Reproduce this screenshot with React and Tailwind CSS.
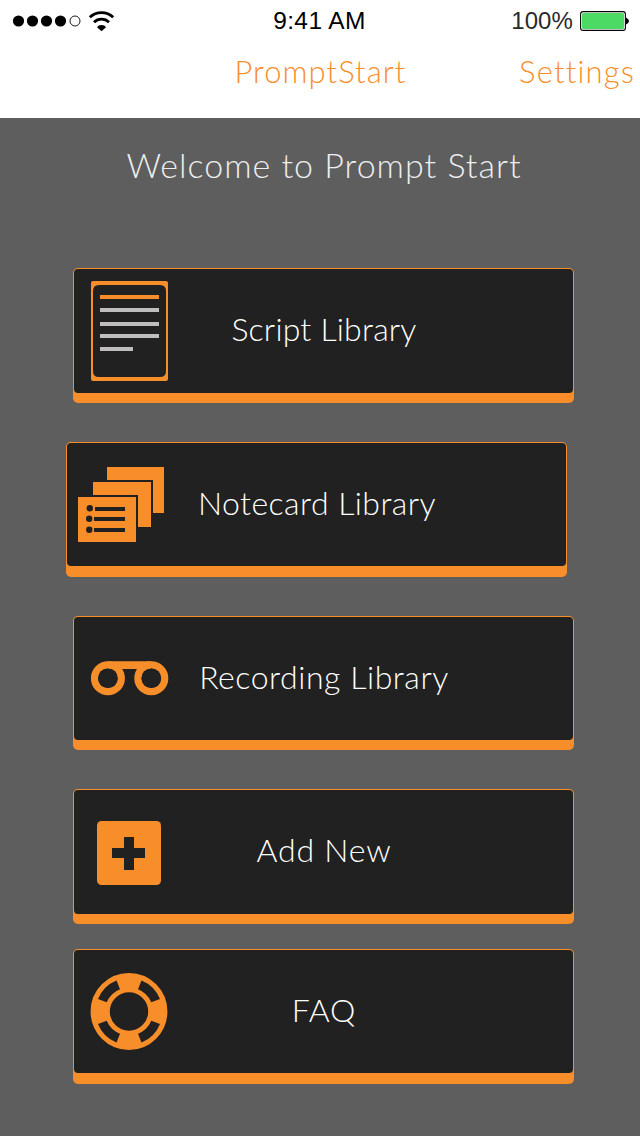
import React from "react";

function ScriptIcon() {
  return (
    <svg viewBox="0 0 77 100" className="ml-[17px] mt-3 h-[100px] w-[77px]">
      <path
        fill="#f88e2a"
        fillRule="evenodd"
        d="M2 0H75Q77 0 77 2V98Q77 100 75 100H2Q0 100 0 98V2Q0 0 2 0ZM8 4Q2 4 2 10V90Q2 96 8 96H69Q75 96 75 90V10Q75 4 69 4Z"
      />
      <path fill="#f88e2a" d="M9 14h59v4H9z" />
      <path fill="#bfbdbd" d="M9 27h59v4H9zM9 41h59v4H9zM9 53h59v4H9zM9 66h33v4H9z" />
    </svg>
  );
}

function NotecardIcon() {
  return (
    <svg viewBox="0 0 86 75" className="ml-[11px] mt-6 h-[75px] w-[86px]">
      <g fill="#f88e2a">
        <path d="M29 0h57v46H75V13H29z" />
        <path d="M15 15h58v45H60V28H15z" />
        <path d="M0 30h58v45H0z" />
      </g>
      <g fill="#212121">
        <circle cx="11.8" cy="41.3" r="3.2" />
        <circle cx="11.2" cy="51.7" r="3.2" />
        <circle cx="11.3" cy="62.7" r="3.2" />
        <path d="M17 40h30v4H17zM16 50h31v4H16zM16 61h31v4H16z" />
      </g>
    </svg>
  );
}

function RecordingIcon() {
  return (
    <svg viewBox="0 0 78 35" className="ml-[17px] mt-[44px] h-[35px] w-[78px]">
      <g fill="none" stroke="#f88e2a" strokeWidth="7.2">
        <circle cx="16.9" cy="17.3" r="13.4" />
        <circle cx="60.3" cy="17.3" r="13.4" />
      </g>
      <path fill="#f88e2a" d="M17 0.2H60V8H17z" />
      <circle cx="16.9" cy="17.3" r="9.8" fill="#212121" />
      <circle cx="60.3" cy="17.3" r="9.8" fill="#212121" />
    </svg>
  );
}

function AddIcon() {
  return (
    <svg viewBox="0 0 64 64" className="ml-[23px] mt-[31px] h-16 w-16">
      <rect width="64" height="64" rx="4.5" fill="#f88e2a" />
      <path fill="#212121" d="M27 16h10v11h11v10H37v12H27V37H15V27h12z" />
    </svg>
  );
}

function FaqIcon() {
  return (
    <svg viewBox="-39 -38.5 78 77" className="ml-4 mt-[23px] h-[77px] w-[78px]">
      <circle r="28.8" fill="none" stroke="#f88e2a" strokeWidth="19.2" />
      <g fill="#212121">
        <path d="M12.5 -31A33.4 33.4 0 0 1 31 -12.4L22.3 -9.2A24.2 24.2 0 0 0 9 -22.2Z" />
        <path d="M-12.5 -31A33.4 33.4 0 0 0 -31 -12.4L-22.3 -9.2A24.2 24.2 0 0 1 -9 -22.2Z" />
        <path d="M12.5 31A33.4 33.4 0 0 0 31 12.4L22.3 9.2A24.2 24.2 0 0 1 9 22.2Z" />
        <path d="M-12.5 31A33.4 33.4 0 0 1 -31 12.4L-22.3 9.2A24.2 24.2 0 0 0 -9 22.2Z" />
      </g>
    </svg>
  );
}

function MenuButton({ icon, label, className, labelClass = "" }) {
  return (
    <button
      className={`grid w-[501px] items-start rounded-[5px] bg-[#f88e2a] px-px pt-px text-left ${className}`}
    >
      <span className="grid h-full w-full rounded-[4px] bg-[#212121]">
        <span className="col-start-1 row-start-1">{icon}</span>
        <span
          className={`col-start-1 row-start-1 mt-10 pl-px text-center text-[32px] leading-10 font-light whitespace-nowrap text-white ${labelClass}`}
        >
          {label}
        </span>
      </span>
    </button>
  );
}

function StatusBar() {
  return (
    <div className="grid h-10 grid-cols-3 items-start pr-[11px] pl-3 font-['Liberation_Sans',sans-serif] text-[24px] leading-10 text-black">
      <svg viewBox="12 0 110 40" className="h-10 w-[110px]">
        <circle cx="18.5" cy="21" r="5.6" />
        <circle cx="32.5" cy="21" r="5.6" />
        <circle cx="46.5" cy="21" r="5.6" />
        <circle cx="60.5" cy="21" r="5.6" />
        <circle cx="75" cy="21" r="5" fill="none" stroke="#000" strokeWidth="0.9" />
        <g fill="none" stroke="#000" strokeWidth="2.8">
          <path d="M89.8 17.2A17 17 0 0 1 113.2 17.2" />
          <path d="M94 22.2A10.7 10.7 0 0 1 109 22.2" />
        </g>
        <path d="M97 27.2Q98 25 101.5 25T106 27.2L101.5 31.2Z" />
      </svg>
      <span className="pt-px pr-0.5 text-center text-[24.5px] tracking-[0.4px]">9:41 AM</span>
      <span className="flex items-center justify-end gap-[7px] pt-px">
        <span className="tracking-[0.1px] text-[#2a2a2a]">100%</span>
        <svg viewBox="0 0 49 20" className="h-5 w-[49px]">
          <rect x="0.6" y="0.6" width="44.8" height="18.8" rx="2.5" fill="none" stroke="#000" strokeWidth="1.1" />
          <rect x="2" y="2" width="42" height="16" rx="1.5" fill="#4cd964" />
          <path d="M46 6.5Q49 8 49 10T46 13.5Z" />
        </svg>
      </span>
    </div>
  );
}

export default function App() {
  return (
    <div className="flex h-[1136px] w-[640px] flex-col bg-[#5e5e5e] font-['Lato',sans-serif]">
      <header className="h-[118px] bg-white">
        <StatusBar />
        <nav className="grid grid-cols-[1fr_auto_1fr] pt-[11px] pr-[5px] pl-1.5 text-[31px] leading-10 font-light text-[#f88e2a]">
          <span className="col-start-2 tracking-[1.05px]">PromptStart</span>
          <span className="text-right tracking-[1.15px]">Settings</span>
        </nav>
      </header>
      <main className="flex flex-col pl-[73px]">
        <h1 className="mt-[27px] w-[501px] pl-px text-center text-[34px] leading-10 font-light tracking-[1px] text-[#eeeeee]">
          Welcome to Prompt Start
        </h1>
        <MenuButton
          icon={<ScriptIcon />}
          label="Script Library"
          labelClass="tracking-[0.2px]"
          className="mt-[83px] h-[135px] pb-[10px]"
        />
        <MenuButton
          icon={<NotecardIcon />}
          label="Notecard Library"
          labelClass="tracking-[0.45px]"
          className="mt-[39px] -ml-[7px] h-[135px] pb-[11px]"
        />
        <MenuButton
          icon={<RecordingIcon />}
          label="Recording Library"
          labelClass="tracking-[0.55px]"
          className="mt-[39px] h-[134px] pb-[10px]"
        />
        <MenuButton
          icon={<AddIcon />}
          label="Add New"
          labelClass="tracking-[0.8px]"
          className="mt-[39px] h-[135px] pb-[10px]"
        />
        <MenuButton
          icon={<FaqIcon />}
          label="FAQ"
          labelClass="pl-0.5 tracking-[0.8px]"
          className="mt-[25px] h-[135px] pb-[11px]"
        />
      </main>
    </div>
  );
}
